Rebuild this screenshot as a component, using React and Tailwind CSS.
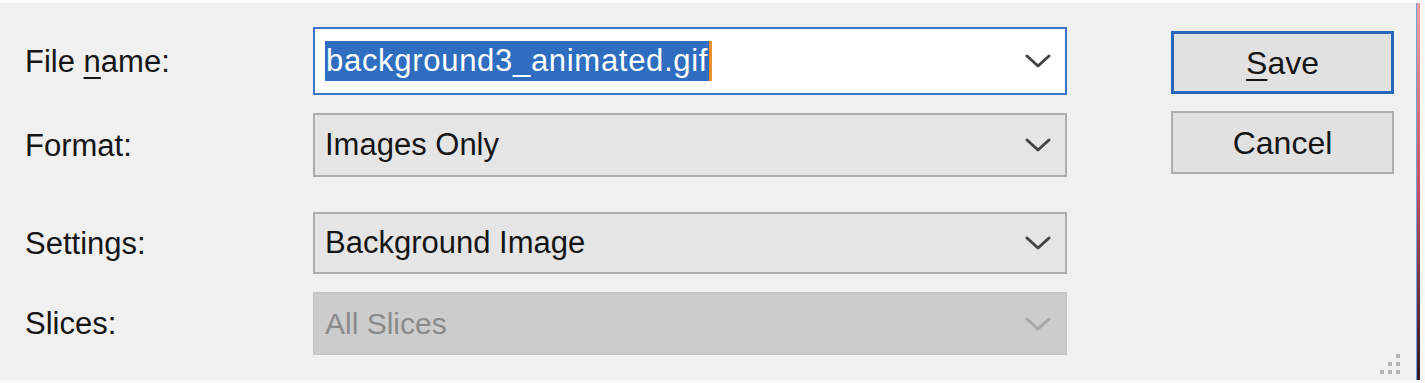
import React from "react";

function Chevron({ color = "#454545" }) {
  return (
    <svg width="26" height="14" viewBox="0 0 26 14" className="shrink-0">
      <path d="M2 2 L13 12 L24 2" fill="none" stroke={color} strokeWidth="3" strokeLinecap="round" strokeLinejoin="round" />
    </svg>
  );
}

function Row({ label, children, h, mt }) {
  return (
    <div className={`flex items-center ${h} ${mt}`}>
      <div className="w-[288px] shrink-0 text-[31px] text-[#151515] leading-none">{label}</div>
      {children}
    </div>
  );
}

export default function App() {
  return (
    <div
      className="w-[1425px] h-[383px] bg-[#f0f0f0] flex border-t-[3px] border-b-[3px] border-[#fafafa] overflow-hidden"
      style={{ fontFamily: '"Liberation Sans", Arial, sans-serif' }}
    >
      <div className="relative w-[1416px] shrink-0 flex pl-[25px] pt-[24px]">
        <div className="flex flex-col">
          <Row label={<span>File <span className="underline underline-offset-[5px] decoration-2">n</span>ame:</span>} h="h-[68px]" mt="">
            <div className="w-[754px] h-full border-2 border-[#3d73c4] bg-white flex items-center pl-[10px] pr-[14px]">
              <div className="flex-1 flex items-center">
                <span className="bg-[#2f6dc0] text-white text-[31px] tracking-[0.7px] leading-[40px] h-[40px] px-[1px]">background3_animated.gif</span>
                <span className="w-[3px] h-[40px] bg-[#f0902c]" />
              </div>
              <Chevron />
            </div>
          </Row>
          <Row label="Format:" h="h-[64px]" mt="mt-[18px]">
            <div className="w-[754px] h-full border-2 border-[#adadad] bg-[#e5e5e5] flex items-center pl-[10px] pr-[14px]">
              <span className="flex-1 text-[31px] text-[#151515]">Images Only</span>
              <Chevron />
            </div>
          </Row>
          <Row label="Settings:" h="h-[62px]" mt="mt-[35px]">
            <div className="w-[754px] h-full border-2 border-[#adadad] bg-[#e5e5e5] flex items-center pl-[10px] pr-[14px]">
              <span className="flex-1 text-[31px] text-[#151515]">Background Image</span>
              <Chevron />
            </div>
          </Row>
          <Row label="Slices:" h="h-[63px]" mt="mt-[18px]">
            <div className="w-[754px] h-full border-2 border-[#c6c6c6] bg-[#cccccc] flex items-center pl-[10px] pr-[14px]">
              <span className="flex-1 text-[30px] text-[#8a8a8a]">All Slices</span>
              <Chevron color="#a6a6a6" />
            </div>
          </Row>
        </div>
        <div className="flex flex-col ml-[104px] pt-[4px]">
          <div className="w-[223px] h-[63px] border-[3px] border-[#2766b8] bg-[#e1e1e1] flex items-center justify-center text-[32px] text-[#151515]">
            <span><span className="underline underline-offset-[5px] decoration-2">S</span>ave</span>
          </div>
          <div className="w-[223px] h-[63px] mt-[17px] border-2 border-[#adadad] bg-[#e1e1e1] flex items-center justify-center text-[32px] text-[#151515]">
            Cancel
          </div>
        </div>
        <svg className="absolute right-[14px] bottom-[5px]" width="24" height="22" viewBox="0 0 24 22">
          <rect x="18" y="1" width="4" height="4" fill="#b4b4b4" />
          <rect x="10" y="9" width="4" height="4" fill="#b4b4b4" />
          <rect x="18" y="9" width="4" height="4" fill="#b4b4b4" />
          <rect x="2" y="17" width="4" height="4" fill="#b4b4b4" />
          <rect x="10" y="17" width="4" height="4" fill="#b4b4b4" />
          <rect x="18" y="17" width="4" height="4" fill="#b4b4b4" />
        </svg>
      </div>
      <div className="w-px shrink-0 bg-[#6fa2e2]" />
      <div className="w-[3px] shrink-0 bg-gradient-to-b from-[#f0a0a0] via-[#c05060] to-[#301828]" />
      <div className="flex-1 bg-[#f8f8f8]" />
    </div>
  );
}
